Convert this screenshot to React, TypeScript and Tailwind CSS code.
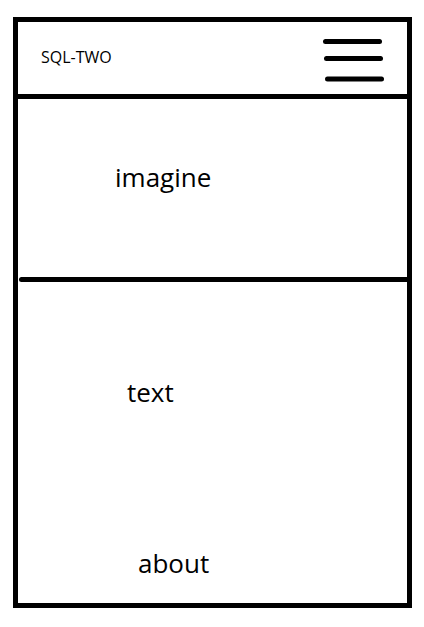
import React from "react";

export default function App() {
  return (
    <div className="w-[424px] h-[627px] bg-white pt-[17px] pl-[13px]" style={{ fontFamily: '"Open Sans", "Liberation Sans", sans-serif' }}>
      <div className="w-[399px] h-[591px] border-[5px] border-black flex flex-col">
        <header className="h-[77px] border-b-[5px] border-black flex items-start justify-between pl-[23px] pr-[21px]">
          <span className="mt-[27px] text-[16px] leading-none text-black">SQL-TWO</span>
          <svg className="mt-[15px]" width="64" height="46" viewBox="0 0 64 46" fill="none" stroke="black" strokeWidth="5" strokeLinecap="round">
            <line x1="3.5" y1="4.5" x2="57.5" y2="4.5" />
            <line x1="4.5" y1="21.5" x2="58.5" y2="21.5" />
            <line x1="5.5" y1="42" x2="59.5" y2="42" />
          </svg>
        </header>
        <section className="h-[178px] pt-[65px] pl-[97px]">
          <p className="text-[26px] leading-none text-black">imagine</p>
        </section>
        <div className="h-[5px] bg-black ml-[1px] rounded-l-full" />
        <section className="flex-1 flex flex-col pt-[97px]">
          <p className="pl-[109px] text-[26px] leading-none text-black">text</p>
          <p className="pl-[120px] mt-[145px] text-[26px] leading-none text-black">about</p>
        </section>
      </div>
    </div>
  );
}
